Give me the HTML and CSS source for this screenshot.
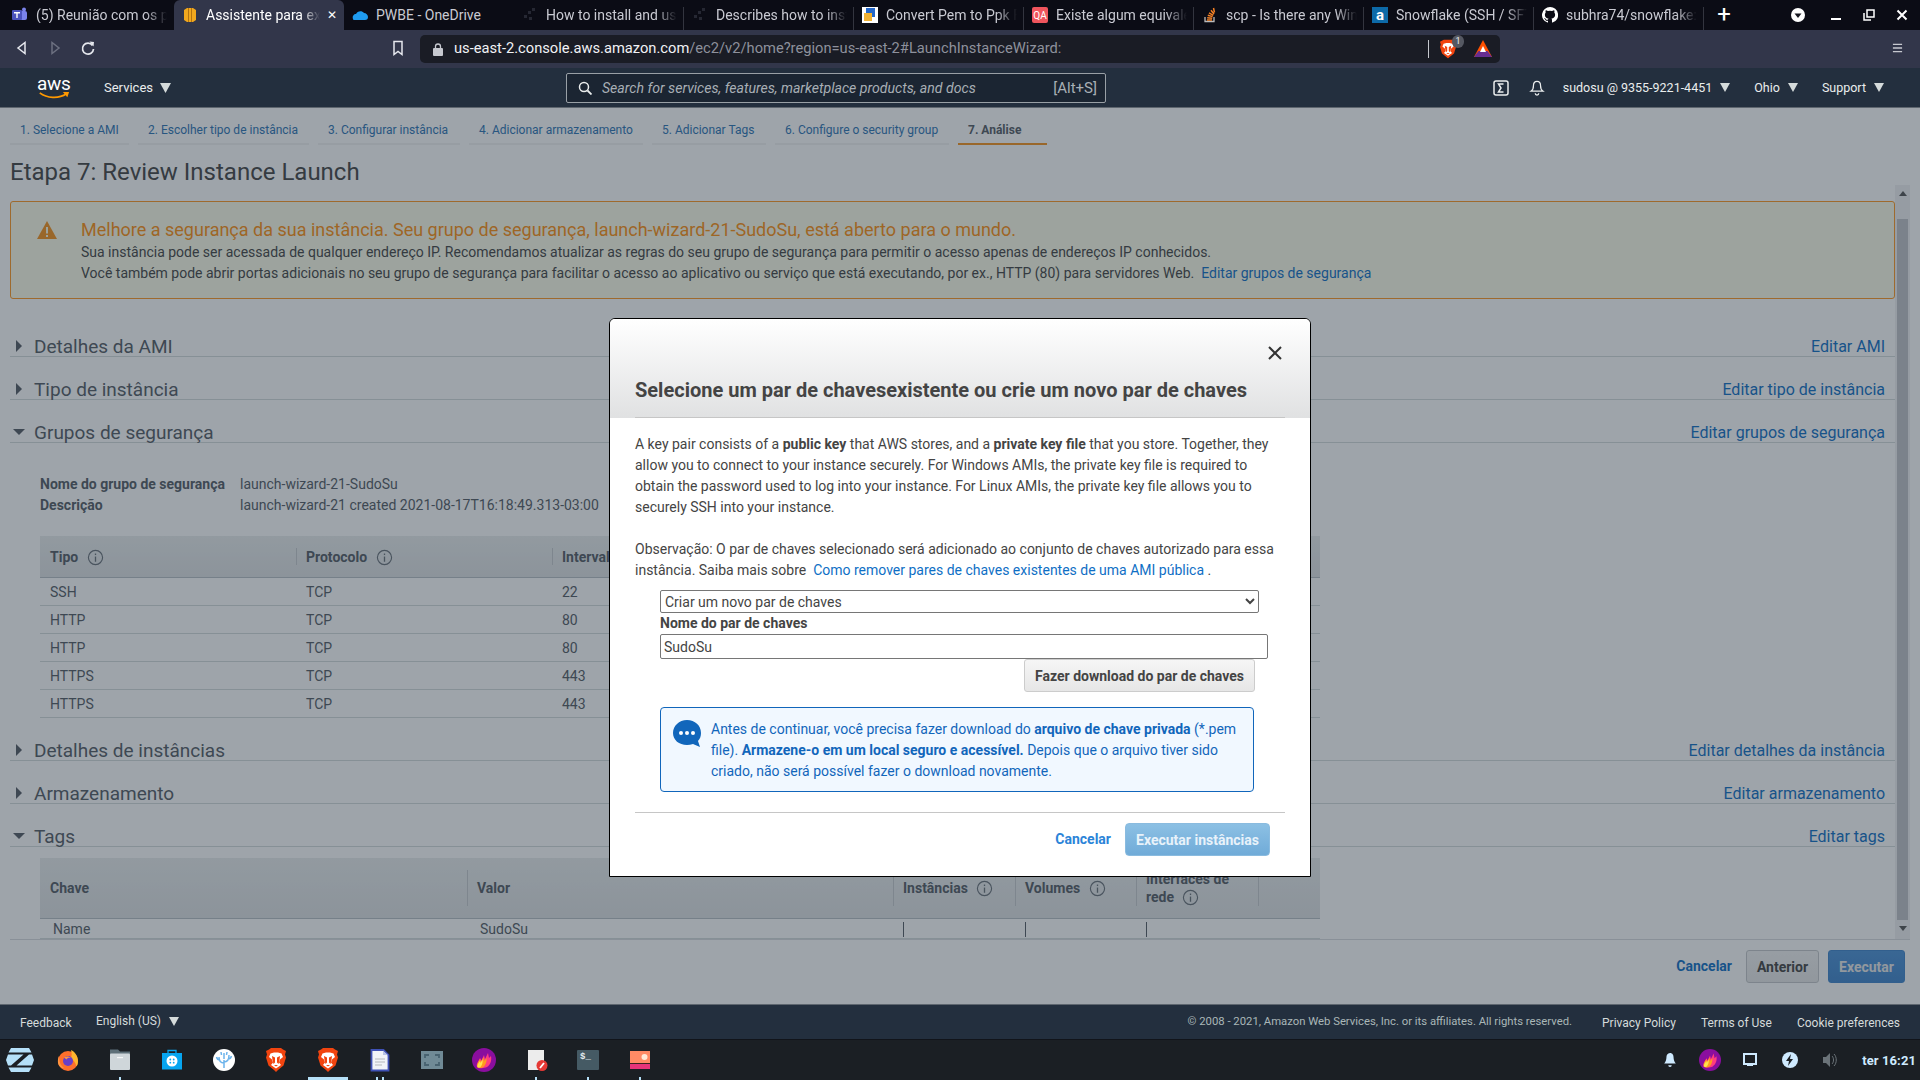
FILE: index.html
```html
<!DOCTYPE html>
<html lang="pt">
<head>
<meta charset="utf-8">
<title>Assistente para executar instâncias</title>
<link rel="stylesheet" href="styles.css">
</head>
<body>
<svg class="defs" width="0" height="0" aria-hidden="true">
  <defs>
    <symbol id="brave" viewBox="0 0 20 24">
      <path fill="#f1440f" d="M5 0h10l2 1.500 3 1.500-1 3.500 1 3-2.500 8L12 22l-2 2-2-2-5.500-4.500L0 9.500l1-3L0 3l3-1.500z"/>
      <path fill="#fff" d="M4.500 5.500L8 4.500h4l3.500 1 1.500 3.500-3 2.500-1 3 2 2.500-5 3.500-5-3.500 2-2.500-1-3L3 9z"/>
      <path fill="#f1440f" d="M6 8l3 1.500v5L7.500 16 6.500 12zM14 8l-3 1.500v5l1.500 1.500 1-4zM8 17h4l-2 1.500z"/>
    </symbol>
    <symbol id="flame" viewBox="0 0 24 24">
      <circle cx="12" cy="12" r="12" fill="#8a0e9e"/>
      <path fill="#ff3d7f" d="M5 19c-1-4 2-6 3-9l1.500 2.500L12 7l1 4 3-6 1 5 2-2c1 5-1 9-4 11-3 1.500-8 1.500-10 0z"/>
      <path fill="#ff9a1f" d="M5 19c-.5-3 1.500-5 3-8l1 3 2.500-5 .5 4 2.500-3c.5 4-1 7-3 9-2 1.500-5 1.500-6.500 0z"/>
      <path fill="#ffe14d" d="M5.500 19c-.5-2 1-4 2.500-6l.5 2 2-3.500c.5 3-.5 6-2 7.500-1 .7-2.300.7-3 0z"/>
    </symbol>
    <symbol id="info" viewBox="0 0 18 18">
      <circle cx="9" cy="9" r="7.5" fill="none" stroke="#687078" stroke-width="1.2"/>
      <rect x="8.3" y="8" width="1.4" height="5.5" fill="#687078"/>
      <rect x="8.3" y="4.8" width="1.4" height="1.6" fill="#687078"/>
    </symbol>
    <symbol id="down" viewBox="0 0 10 9"><path fill="#d5dbdb" d="M0 0h10L5 9z"/></symbol>
    <symbol id="coll" viewBox="0 0 8 12"><path fill="#545b64" d="M1 0l6 6-6 6z"/></symbol>
    <symbol id="open" viewBox="0 0 12 8"><path fill="#545b64" d="M0 1h12L6 7z"/></symbol>
  </defs>
</svg>

<header class="tabstrip">
  <div class="tab"><svg class="fav" viewBox="0 0 16 16"><rect x="6" y="4" width="9" height="9" rx="2" fill="#7b83eb"/><circle cx="12" cy="2.5" r="2" fill="#7b83eb"/><rect x="0" y="3" width="10" height="10" rx="1" fill="#4b53bc"/><path fill="#fff" d="M2 5h6v1.4H5.7V11H4.3V6.4H2z"/></svg><span class="tab-title">(5) Reunião com os participantes</span></div>
  <div class="tab tab-active"><svg class="fav" viewBox="0 0 16 16"><path fill="#f2a81d" d="M2 3l3-2h6l3 2v10l-3 2H5l-3-2z"/><path fill="#b3730f" d="M6 1v14h1V1zM10 1v14H9V1z"/></svg><span class="tab-title">Assistente para executar</span><span class="tab-close">✕</span></div>
  <div class="tab"><svg class="fav" viewBox="0 0 16 16"><path fill="#1f9cf0" d="M1 12c-1-3 1-5 3-5 1-3 6-4 8-1 2 0 4 2 4 4s-1 3-3 3H3c-1 0-2 0-2-1z"/></svg><span class="tab-title tab-plain">PWBE - OneDrive</span></div>
  <div class="tab"><svg class="fav" viewBox="0 0 16 16"><g fill="#262833"><rect x="2" y="8" width="3" height="3"/><rect x="6" y="4" width="3" height="3"/><rect x="10" y="1" width="3" height="3"/><rect x="7" y="10" width="3" height="3"/></g></svg><span class="tab-title">How to install and use</span></div>
  <div class="tab"><svg class="fav" viewBox="0 0 16 16"><g fill="#262833"><rect x="2" y="8" width="3" height="3"/><rect x="6" y="4" width="3" height="3"/><rect x="10" y="1" width="3" height="3"/><rect x="7" y="10" width="3" height="3"/></g></svg><span class="tab-title">Describes how to install</span></div>
  <div class="tab"><svg class="fav" viewBox="0 0 16 16"><rect width="16" height="16" fill="#fff"/><rect x="4" y="1" width="9" height="9" fill="#2467c9"/><rect x="2" y="6" width="8" height="8" fill="#f2b233"/></svg><span class="tab-title">Convert Pem to Ppk File</span></div>
  <div class="tab"><svg class="fav" viewBox="0 0 16 16"><rect width="16" height="16" rx="2" fill="#f0555d"/><text x="8" y="12" class="fav-text">QA</text></svg><span class="tab-title">Existe algum equivalente</span></div>
  <div class="tab"><svg class="fav" viewBox="0 0 16 16"><path fill="none" stroke="#bcbbbb" stroke-width="1.3" d="M3 10v4.5h9V10"/><path fill="none" stroke="#f48024" stroke-width="1.5" d="M5 13h5M5.2 10.7l5 .5M5.8 8.3l4.8 1.3M7 5.8l4.3 2.5M9 3.2l3 3.8M11.5 1l1 4.5"/></svg><span class="tab-title">scp - Is there any Windows</span></div>
  <div class="tab"><svg class="fav" viewBox="0 0 16 16"><rect width="16" height="16" fill="#0d6aa8"/><text x="8" y="13" class="fav-text fav-large">a</text></svg><span class="tab-title">Snowflake (SSH / SFTP</span></div>
  <div class="tab"><svg class="fav" viewBox="0 0 16 16"><path fill="#fff" d="M8 0a8 8 0 0 0-2.5 15.6c.4.1.5-.2.5-.4v-1.4c-2.2.5-2.7-1-2.7-1-.4-.9-.9-1.200-.9-1.200-.7-.5.100-.5.100-.5.800.100 1.200.8 1.200.8.700 1.200 1.900.9 2.300.7.100-.5.300-.9.500-1.100-1.800-.2-3.600-.9-3.600-4 0-.9.300-1.600.8-2.100-.1-.2-.4-1 .1-2.100 0 0 .7-.2 2.200.8a7.600 7.600 0 0 1 4 0c1.500-1 2.200-.8 2.200-.8.500 1.100.2 1.900.1 2.100.5.500.8 1.200.8 2.100 0 3.100-1.900 3.800-3.700 4 .3.300.6.800.6 1.500v2.200c0 .2.100.5.600.4A8 8 0 0 0 8 0z"/></svg><span class="tab-title">subhra74/snowflake: Easy</span></div>
  <span class="new-tab">+</span>
  <div class="win-controls">
    <svg class="win-profile" viewBox="0 0 14 14"><circle cx="7" cy="7" r="7" fill="#fff"/><path fill="#15161f" d="M3.500 5.500h7L7 10z"/></svg>
    <svg class="win-icon" viewBox="0 0 14 14"><rect x="2" y="10" width="10" height="2" fill="#fff"/></svg>
    <svg class="win-icon" viewBox="0 0 14 14"><path fill="none" stroke="#fff" stroke-width="1.500" d="M5 2h7v7H5zM2 5v7h7"/></svg>
    <svg class="win-icon" viewBox="0 0 14 14"><path stroke="#fff" stroke-width="2" d="M2.500 2.500l9 9M11.500 2.500l-9 9"/></svg>
  </div>
</header>

<div class="toolbar">
  <div class="nav-buttons">
    <svg class="tool-icon" viewBox="0 0 16 16"><path fill="none" stroke="#e6e8ee" stroke-width="1.500" d="M11 2.500v11L4 8z"/></svg>
    <svg class="tool-icon" viewBox="0 0 16 16"><path fill="none" stroke="#6c7080" stroke-width="1.500" d="M5 2.500v11L12 8z"/></svg>
    <svg class="tool-icon" viewBox="0 0 16 16"><path fill="none" stroke="#e6e8ee" stroke-width="1.700" d="M12.500 5.500A5.500 5.500 0 1 0 13.500 9"/><path fill="#e6e8ee" d="M9.500 1.500l4.500.5-.5 4.500z"/></svg>
  </div>
  <svg class="bookmark" viewBox="0 0 12 16"><path fill="none" stroke="#e6e8ee" stroke-width="1.500" d="M2 1.500h8v13l-4-3-4 3z"/></svg>
  <div class="address">
    <svg class="lock" viewBox="0 0 10 13"><rect y="5" width="10" height="8" rx="1" fill="#c6c8cf"/><path fill="none" stroke="#c6c8cf" stroke-width="1.300" d="M2.500 5V3.500a2.500 2.500 0 0 1 5 0V5"/></svg>
    <span class="url"><span class="url-host">us-east-2.console.aws.amazon.com</span>/ec2/v2/home?region=us-east-2#LaunchInstanceWizard:</span>
    <span class="addr-sep"></span>
    <span class="shield-wrap"><svg class="shield" viewBox="0 0 20 24"><use href="#brave"/></svg><span class="shield-badge">1</span></span>
    <svg class="bat" viewBox="0 0 18 18"><path fill="#ff5000" d="M9 0l9 17H0z"/><path fill="#662d91" d="M4.500 11h9L18 17H0z"/><path fill="#fff" d="M9 6l3 6H6z"/></svg>
  </div>
  <svg class="hamburger" viewBox="0 0 12 12"><path stroke="#c6c8cf" stroke-width="1.500" d="M1 2h10M1 6h10M1 10h10"/></svg>
</div>

<nav class="aws-nav">
  <div class="aws-logo"><span class="aws-word">aws</span><svg class="aws-smile" viewBox="0 0 34 9"><path fill="none" stroke="#f90" stroke-width="2" d="M1 1c8 6 21 7 30 1"/><path fill="#f90" d="M27 0l7 0-2 6z"/></svg></div>
  <span class="nav-item nav-services">Services<svg class="caret caret-big" viewBox="0 0 10 9"><use href="#down"/></svg></span>
  <div class="search">
    <svg class="search-icon" viewBox="0 0 14 14"><circle cx="6" cy="6" r="4.500" fill="none" stroke="#eaeded" stroke-width="1.500"/><path stroke="#eaeded" stroke-width="1.800" d="M9.500 9.500l4 4"/></svg>
    <span class="search-text">Search for services, features, marketplace products, and docs</span>
    <span class="search-key">[Alt+S]</span>
  </div>
  <div class="nav-right">
    <svg class="nav-svg" viewBox="0 0 16 16"><rect x="1" y="1" width="14" height="14" rx="2" fill="none" stroke="#eaeded" stroke-width="1.500"/><path fill="none" stroke="#eaeded" stroke-width="1.500" d="M10.500 4H5.500L8 8l-2.500 4h5"/></svg>
    <svg class="nav-svg bell" viewBox="0 0 16 18"><path fill="none" stroke="#eaeded" stroke-width="1.400" d="M8 1.500c-3 0-4 2.500-4 5 0 3-1 5-2.500 6h13c-1.500-1-2.500-3-2.500-6 0-2.500-1-5-4-5z"/><path fill="none" stroke="#eaeded" stroke-width="1.400" d="M6 15a2 2 0 0 0 4 0"/></svg>
    <span class="nav-item nav-user">sudosu @ 9355-9221-4451<svg class="caret" viewBox="0 0 10 9"><use href="#down"/></svg></span>
    <span class="nav-item nav-region">Ohio<svg class="caret" viewBox="0 0 10 9"><use href="#down"/></svg></span>
    <span class="nav-item nav-support">Support<svg class="caret" viewBox="0 0 10 9"><use href="#down"/></svg></span>
  </div>
</nav>

<main class="console">
  <ul class="wizard">
    <li class="step">1. Selecione a AMI</li>
    <li class="step">2. Escolher tipo de instância</li>
    <li class="step">3. Configurar instância</li>
    <li class="step">4. Adicionar armazenamento</li>
    <li class="step">5. Adicionar Tags</li>
    <li class="step">6. Configure o security group</li>
    <li class="step step-active">7. Análise</li>
  </ul>
  <h1 class="page-title">Etapa 7: Review Instance Launch</h1>
  <div class="scroll-row">
    <div class="scroll-content">
      <div class="warning">
        <svg class="warn-icon" viewBox="0 0 20 18"><path fill="#f7931e" d="M10 0l10 18H0z"/><rect x="9" y="6" width="2" height="6.500" fill="#fdfeea"/><rect x="9" y="14" width="2" height="2" fill="#fdfeea"/></svg>
        <div class="warn-body">
          <div class="warn-title">Melhore a segurança da sua instância. Seu grupo de segurança, launch-wizard-21-SudoSu, está aberto para o mundo.</div>
          <div>Sua instância pode ser acessada de qualquer endereço IP. Recomendamos atualizar as regras do seu grupo de segurança para permitir o acesso apenas de endereços IP conhecidos.</div>
          <div>Você também pode abrir portas adicionais no seu grupo de segurança para facilitar o acesso ao aplicativo ou serviço que está executando, por ex., HTTP (80) para servidores Web.&nbsp; <a class="link warn-link">Editar grupos de segurança</a></div>
        </div>
      </div>

      <div class="section"><svg class="tri-coll" viewBox="0 0 8 12"><use href="#coll"/></svg><span class="section-name">Detalhes da AMI</span><a class="link section-edit">Editar AMI</a></div>
      <div class="section"><svg class="tri-coll" viewBox="0 0 8 12"><use href="#coll"/></svg><span class="section-name">Tipo de instância</span><a class="link section-edit">Editar tipo de instância</a></div>
      <div class="section"><svg class="tri-open" viewBox="0 0 12 8"><use href="#open"/></svg><span class="section-name">Grupos de segurança</span><a class="link section-edit">Editar grupos de segurança</a></div>

      <dl class="details">
        <dt>Nome do grupo de segurança</dt><dd>launch-wizard-21-SudoSu</dd>
        <dt>Descrição</dt><dd>launch-wizard-21 created 2021-08-17T16:18:49.313-03:00</dd>
      </dl>

      <table class="grid grid-sg">
        <colgroup><col class="c256"><col class="c256"><col></colgroup>
        <thead><tr><th>Tipo <svg class="info" viewBox="0 0 18 18"><use href="#info"/></svg></th><th>Protocolo <svg class="info" viewBox="0 0 18 18"><use href="#info"/></svg></th><th>Intervalo de portas</th></tr></thead>
        <tbody>
          <tr><td>SSH</td><td>TCP</td><td>22</td></tr>
          <tr><td>HTTP</td><td>TCP</td><td>80</td></tr>
          <tr><td>HTTP</td><td>TCP</td><td>80</td></tr>
          <tr><td>HTTPS</td><td>TCP</td><td>443</td></tr>
          <tr><td>HTTPS</td><td>TCP</td><td>443</td></tr>
        </tbody>
      </table>

      <div class="section"><svg class="tri-coll" viewBox="0 0 8 12"><use href="#coll"/></svg><span class="section-name">Detalhes de instâncias</span><a class="link section-edit">Editar detalhes da instância</a></div>
      <div class="section"><svg class="tri-coll" viewBox="0 0 8 12"><use href="#coll"/></svg><span class="section-name">Armazenamento</span><a class="link section-edit">Editar armazenamento</a></div>
      <div class="section"><svg class="tri-open" viewBox="0 0 12 8"><use href="#open"/></svg><span class="section-name">Tags</span><a class="link section-edit">Editar tags</a></div>

      <table class="grid grid-tags">
        <colgroup><col class="c427"><col class="c426"><col class="c122"><col class="c121"><col class="c122"><col></colgroup>
        <thead><tr><th>Chave</th><th>Valor</th><th>Instâncias <svg class="info" viewBox="0 0 18 18"><use href="#info"/></svg></th><th>Volumes <svg class="info" viewBox="0 0 18 18"><use href="#info"/></svg></th><th>Interfaces de rede <svg class="info" viewBox="0 0 18 18"><use href="#info"/></svg></th><th></th></tr></thead>
        <tbody><tr><td class="td-indent">Name</td><td class="td-indent">SudoSu</td><td class="td-tick"></td><td class="td-tick"></td><td class="td-tick"></td><td></td></tr></tbody>
      </table>
    </div>
    <div class="scrollbar"><span class="sb-arrow sb-up"></span><span class="sb-thumb"></span><span class="sb-arrow sb-down"></span></div>
  </div>
  <div class="actions">
    <a class="link action-cancel">Cancelar</a>
    <button class="btn btn-prev">Anterior</button>
    <button class="btn btn-run">Executar</button>
  </div>
  <div class="overlay"></div>
</main>

<footer class="aws-footer">
  <span class="foot-feedback">Feedback</span>
  <span class="foot-lang">English (US)<svg class="caret" viewBox="0 0 10 9"><use href="#down"/></svg></span>
  <span class="foot-copy">© 2008 - 2021, Amazon Web Services, Inc. or its affiliates. All rights reserved.</span>
  <span class="foot-link">Privacy Policy</span>
  <span class="foot-link">Terms of Use</span>
  <span class="foot-link">Cookie preferences</span>
</footer>

<div class="taskbar">
  <svg class="zorin" viewBox="0 0 28 24"><path fill="#b5e0f8" d="M5 0h18l2.500 4.500H2.500zM2.500 19.500h23L23 24H5z"/><path fill="#b5e0f8" d="M2 6.500h15.500L5 17.500H2l-2-5.500zM26 6.500l2 5.500-2 5.500H10.500L23 6.500z"/></svg>
  <div class="dock">
    <span class="dock-item"><svg class="dock-icon" viewBox="0 0 24 24"><circle cx="12" cy="13" r="10" fill="#ff6f2c"/><path fill="#ffb52e" d="M15 2c4 2 7 6 7 11 0 2-.5 4-1.500 5.500-1-4-3-7-6-8 1.500-2.500 1.500-5 .5-8.500z"/><path fill="#ff9640" d="M3 8c0 5 1 9 5 12-3 0-5.500-2-6-5-.3-2.500 0-5 1-7z"/><circle cx="12" cy="13" r="5" fill="#6a3fc8"/><path fill="#ff9640" d="M8 9.500c2-1.500 5-1.500 7 .5-2-.5-4 0-4.500 1.500z"/></svg></span>
    <span class="dock-item dots-1"><svg class="dock-icon" viewBox="0 0 24 24"><path fill="#5d6f78" d="M2 1.500h8l2 2h10v5H2z"/><rect x="2" y="5.500" width="20" height="16.500" rx="1" fill="#cfd6da"/><rect x="9" y="9" width="6" height="1.200" fill="#f4f6f7"/></svg></span>
    <span class="dock-item"><svg class="dock-icon" viewBox="0 0 24 24"><rect x="2" y="5" width="20" height="16.500" fill="#06a5f0"/><path fill="none" stroke="#06a5f0" stroke-width="1.300" d="M8 5V2.500h8V5"/><circle cx="12" cy="13" r="5.500" fill="#fff"/><circle cx="10.300" cy="11.500" r=".9" fill="#06a5f0"/><circle cx="13.700" cy="11.500" r=".9" fill="#06a5f0"/><circle cx="10.300" cy="14.700" r=".9" fill="#06a5f0"/><circle cx="13.700" cy="14.700" r=".9" fill="#06a5f0"/></svg></span>
    <span class="dock-item"><svg class="dock-icon" viewBox="0 0 24 24"><circle cx="12" cy="12" r="11" fill="#fff"/><path fill="none" stroke="#6cb4ec" stroke-width="1.500" d="M12 20v-8M12 15c-3 0-5-2-5-6M12 14c3 0 5-2 5-7M8 12c-1.500 0-3-1-3.500-3M16 11c1.500 0 3-1 3.500-3M12 11V5M9.500 7L9 4M14.500 7l.5-3"/></svg></span>
    <span class="dock-item"><svg class="dock-brave" viewBox="0 0 20 24"><use href="#brave"/></svg></span>
    <span class="dock-item dock-active"><svg class="dock-brave" viewBox="0 0 20 24"><use href="#brave"/></svg></span>
    <span class="dock-item dots-2"><svg class="dock-icon" viewBox="0 0 24 24"><path fill="#f1f3f8" d="M4 2h11l5 5v15H4z"/><path fill="none" stroke="#3f51b5" stroke-width="1.800" d="M3.500 2h12l5 5v15.500h-17z"/><path fill="#b9c3e6" d="M15 2.500V7h5z"/><path stroke="#b5b8bd" stroke-width="1" d="M7 11h10M7 14h10M7 17h7"/></svg></span>
    <span class="dock-item"><svg class="dock-icon" viewBox="0 0 24 24"><rect x="1" y="3" width="22" height="18" fill="#708a96"/><path fill="none" stroke="#486270" stroke-width="1.800" d="M5 10V7h4M15 7h4v3M19 14v3h-4M9 17H5v-3"/></svg></span>
    <span class="dock-item"><svg class="dock-icon" viewBox="0 0 24 24"><use href="#flame"/></svg></span>
    <span class="dock-item dots-1"><svg class="dock-icon" viewBox="0 0 24 24"><rect x="4" y="2" width="16" height="20" fill="#ececec"/><circle cx="18" cy="17.500" r="5.500" fill="#e53935"/><path stroke="#fff" stroke-width="1.800" d="M16 20l4-5"/></svg></span>
    <span class="dock-item dots-1"><svg class="dock-icon" viewBox="0 0 24 24"><rect x="1" y="2" width="22" height="20" rx="1" fill="#455a64"/><text x="4" y="11" class="term-text">$_</text></svg></span>
    <span class="dock-item dots-1"><svg class="dock-icon" viewBox="0 0 24 24"><rect x="2" y="3" width="20" height="12" fill="#ff8a65"/><rect x="2" y="15" width="20" height="1" fill="#3a2020"/><rect x="2" y="16" width="20" height="5" fill="#e6337a"/><circle cx="16.500" cy="9" r="3" fill="#ffe9d8"/></svg></span>
  </div>
  <div class="tray">
    <svg class="tray-icon" viewBox="0 0 16 18"><path fill="#cfeaff" d="M8 1c-3 0-4 2.500-4 5 0 3-1 5-2.500 7h13C13 11 12 9 12 6c0-2.500-1-5-4-5z"/><path fill="#cfeaff" d="M6 15h4a2 2 0 0 1-4 0z"/></svg>
    <svg class="tray-icon tray-flame" viewBox="0 0 24 24"><use href="#flame"/></svg>
    <svg class="tray-icon" viewBox="0 0 16 16"><path fill="none" stroke="#cfeaff" stroke-width="2" d="M2 2h12v10H2z"/><rect x="5" y="12" width="6" height="2" fill="#cfeaff"/></svg>
    <svg class="tray-icon" viewBox="0 0 16 16"><circle cx="8" cy="8" r="8" fill="#cfeaff"/><path fill="#1b1f24" d="M9 2L4 9h3l-1 5 5-7H8z"/></svg>
    <svg class="tray-icon" viewBox="0 0 16 16"><path fill="#6b7379" d="M1 5h3l4-4v14l-4-4H1z"/><path fill="none" stroke="#6b7379" d="M10 4c2 2 2 6 0 8M12 2c3 3 3 9 0 12"/></svg>
    <span class="clock">ter 16:21</span>
  </div>
</div>

<section class="modal" role="dialog">
  <div class="modal-head">
    <svg class="modal-close" viewBox="0 0 14 14"><path stroke="#333" stroke-width="2" d="M1 1l12 12M13 1L1 13"/></svg>
    <h2 class="modal-title">Selecione um par de chavesexistente ou crie um novo par de chaves</h2>
  </div>
  <div class="modal-body">
    <p class="modal-text">A key pair consists of a <b>public key</b> that AWS stores, and a <b>private key file</b> that you store. Together, they allow you to connect to your instance securely. For Windows AMIs, the private key file is required to obtain the password used to log into your instance. For Linux AMIs, the private key file allows you to securely SSH into your instance.</p>
    <p class="modal-text">Observação: O par de chaves selecionado será adicionado ao conjunto de chaves autorizado para essa instância. Saiba mais sobre&nbsp; <a class="modal-link">Como remover pares de chaves existentes de uma AMI pública</a> .</p>
    <div class="form">
      <select class="key-select"><option>Criar um novo par de chaves</option></select>
      <label class="key-label">Nome do par de chaves</label>
      <input class="key-input" type="text" value="SudoSu">
      <button class="btn-download">Fazer download do par de chaves</button>
      <div class="notice">
        <svg class="notice-icon" viewBox="0 0 30 30"><path fill="#1166bb" d="M15 1c8 0 14 5.500 14 13 0 3-1 6-3 8l2 6-7-3c-2 .7-4 1-6 1C7 26 1 21 1 14S7 1 15 1z"/><circle cx="9" cy="14" r="2" fill="#fff"/><circle cx="15" cy="14" r="2" fill="#fff"/><circle cx="21" cy="14" r="2" fill="#fff"/></svg>
        <p class="notice-text">Antes de continuar, você precisa fazer download do <b>arquivo de chave privada</b> (*.pem file). <b>Armazene-o em um local seguro e acessível.</b> Depois que o arquivo tiver sido criado, não será possível fazer o download novamente.</p>
      </div>
    </div>
  </div>
  <div class="modal-foot">
    <a class="modal-cancel">Cancelar</a>
    <button class="btn-launch">Executar instâncias</button>
  </div>
</section>
</body>
</html>
```

FILE: styles.css
```css
* { box-sizing: border-box; }
html, body { margin: 0; padding: 0; height: 100%; overflow: hidden; }
body {
  width: 1920px; height: 1080px;
  display: flex; flex-direction: column;
  font-family: Roboto, "Liberation Sans", sans-serif;
  font-size: 14px; color: #444;
  background: #fff; position: relative;
}
.defs { position: absolute; }
a { text-decoration: none; }

/* browser tab strip */
.tabstrip { height: 30px; flex: none; display: flex; background: #0b0c15; padding-left: 4px; color: #c9cad2; }
.tab { width: 170px; height: 30px; display: flex; align-items: center; padding-left: 8px; position: relative; font-size: 14px; }
.tab::after { content: ""; position: absolute; right: 0; top: 7px; bottom: 0; width: 1px; background: #33353f; }
.tab:nth-child(1)::after, .tab:nth-child(2)::after, .tab:nth-child(3)::after { display: none; }
.tab-active { background: #32364a; color: #fff; border-radius: 6px 6px 0 0; }
.fav { width: 16px; height: 16px; flex: none; margin-right: 8px; }
.fav-text { fill: #fff; font: 400 10px Roboto, sans-serif; text-anchor: middle; }
.fav-large { font-size: 15px; font-weight: 700; }
.tab-title {
  white-space: nowrap; overflow: hidden; flex: 1; margin-right: 7px;
  -webkit-mask-image: linear-gradient(90deg, #000 84%, transparent 100%);
  mask-image: linear-gradient(90deg, #000 84%, transparent 100%);
}
.tab-plain { -webkit-mask-image: none; mask-image: none; }
.tab-active .tab-title { margin-right: 2px; }
.tab-close { width: 20px; flex: none; font-size: 12px; color: #fff; text-align: center; margin-right: 2px; }
.new-tab { width: 40px; margin-left: 0; color: #fff; font-size: 24px; line-height: 28px; text-align: center; font-weight: 400; }
.win-controls { margin-left: auto; display: flex; align-items: center; gap: 19px; padding-right: 11px; }
.win-profile { width: 14px; height: 14px; margin-right: 5px; }
.win-icon { width: 14px; height: 14px; }

/* browser toolbar */
.toolbar { height: 38px; flex: none; background: #32364a; display: flex; align-items: center; padding: 0 17px 2px 14px; }
.nav-buttons { display: flex; gap: 17px; width: 368px; }
.tool-icon { width: 16px; height: 16px; }
.bookmark { width: 12px; height: 16px; margin-left: 10px; margin-right: 16px; }
.address {
  width: 1080px; height: 28px; flex: none; background: #1a1c25; border-radius: 5px; margin-top: 2px;
  display: flex; align-items: center; padding-left: 13px; color: #8e919c; font-size: 14.7px;
}
.lock { width: 10px; height: 13px; margin-right: 11px; }
.url { width: 974px; white-space: nowrap; margin-top: -2px; }
.url-host { color: #f1f2f5; }
.addr-sep { width: 1px; height: 18px; background: #c6c8cf; }
.shield-wrap { position: relative; display: flex; margin-left: 11px; }
.shield { width: 16px; height: 20px; }
.shield-badge {
  position: absolute; left: 12px; top: -4px; width: 12px; height: 13px; border-radius: 6px;
  background: #555862; color: #eee; font-size: 9px; line-height: 13px; text-align: center;
}
.bat { width: 18px; height: 18px; margin-left: 18px; }
.hamburger { width: 11px; height: 12px; margin-left: auto; }

/* aws nav */
.aws-nav {
  height: 40px; flex: none; background: #232f3e; border-bottom: 1px solid #5e666f;
  display: flex; align-items: center; color: #eaeded; font-size: 12px;
}
.aws-logo { width: 67px; margin-left: 37px; display: flex; flex-direction: column; height: 24px; }
.aws-word { color: #fff; font-size: 19px; line-height: 16px; letter-spacing: -.3px; }
.aws-smile { width: 34px; height: 8px; }
.nav-item { display: flex; align-items: center; white-space: nowrap; }
.nav-services { font-size: 13px; width: 462px; }
.caret { width: 10px; height: 9px; margin-left: 8px; }
.caret-big { width: 11px; height: 10px; margin-left: 7px; }
.search {
  width: 540px; height: 30px; flex: none; margin-top: 1px; border: 1px solid #99a0a6; border-radius: 2px;
  display: flex; align-items: center; padding: 0 8px 0 11px; background: #1b2532;
  font-size: 14.1px; color: #a8afb5;
}
.search-icon { width: 14px; height: 14px; margin-right: 10px; }
.search-text { font-style: italic; flex: 1; white-space: nowrap; }
.search-key { color: #a8afb5; font-size: 15px; }
.nav-right { margin-left: auto; display: flex; align-items: center; padding-right: 36px; font-size: 12.5px; }
.nav-svg { width: 16px; height: 16px; margin-right: 20px; }
.bell { margin-right: 18px; }
.nav-user { margin-right: 24px; }
.nav-region { margin-right: 24px; }

/* console */
.console { flex: 1; position: relative; min-height: 0; background: #fff; display: flex; flex-direction: column; }
.wizard { list-style: none; margin: 0; padding: 0 0 0 10px; display: flex; gap: 9px; height: 37px; flex: none; }
.step { height: 37px; padding: 0 10px; line-height: 44px; font-size: 12px; color: #2d74b4; border-bottom: 2px solid #f2f3f3; white-space: nowrap; }
.step:nth-child(1) { width: 119px; }
.step:nth-child(2) { width: 171px; }
.step:nth-child(3) { width: 142px; }
.step:nth-child(4) { width: 174px; }
.step:nth-child(5) { width: 114px; }
.step:nth-child(6) { width: 174px; }
.step-active { width: 89px; color: #545b64; font-weight: 700; border-bottom-color: #f7931e; }
.page-title { margin: 13px 0 0 10px; height: 27px; font-size: 24px; line-height: 28px; font-weight: 400; color: #444; flex: none; }

.scroll-row { height: 755px; flex: none; display: flex; margin-left: 10px; margin-right: 10px; border-bottom: 1px solid #d9dcdf; }
.scroll-content { width: 1885px; flex: none; padding-top: 16px; overflow: hidden; }
.warning {
  height: 98px; border: 1px solid #ff9822; border-radius: 3px; background: #fdfeea;
  display: flex; margin-bottom: 30px; padding: 17px 0 0 26px; line-height: 21px; color: #444;
}
.warn-icon { width: 20px; height: 18px; flex: none; margin: 2px 24px 0 0; }
.warn-body { white-space: nowrap; }
.warn-title { font-size: 18px; color: #ff9011; line-height: 21px; margin-bottom: 2px; }
.link { color: #0f6fc5; }
.section {
  height: 28px; margin-top: 15px; border-bottom: 1px solid #d5dbdb; display: flex; align-items: center;
  position: relative; padding: 9px 10px 0 24px;
}
.tri-coll { width: 8px; height: 12px; position: absolute; left: 5px; top: 11px; }
.tri-open { width: 12px; height: 8px; position: absolute; left: 3px; top: 13px; }
.section-name { font-size: 19px; color: #545b64; line-height: 24px; }
.section-edit { margin-left: auto; margin-top: -1px; font-size: 16px; }
.details { margin: 31px 0 20px 30px; display: grid; grid-template-columns: 200px auto; line-height: 21px; }
.details dt { font-weight: 700; color: #545b64; }
.details dd { margin: 0; color: #545b64; }
.grid { border-collapse: collapse; table-layout: fixed; width: 1280px; margin-left: 30px; color: #545b64; }
.c256 { width: 256px; }
.c427 { width: 427px; }
.c426 { width: 426px; }
.c122 { width: 122px; }
.c121 { width: 121px; }
.grid th {
  background: linear-gradient(#eaeded, #dfe2e4); border-bottom: 1px solid #b8bfc4; text-align: left; font-weight: 700;
  padding: 1px 10px 0; position: relative; white-space: normal; line-height: 18px;
}
.grid th + th::before { content: ""; position: absolute; left: 0; top: 12px; bottom: 12px; width: 1px; background: #c6cacd; }
.grid-sg th { height: 41px; }
.grid-sg td { height: 28px; padding: 1px 10px 0; border-bottom: 1px solid #d5dbdb; }
.grid-tags { margin-top: 11px; }
.grid-tags th { height: 61px; }
.grid-tags td { height: 19px; padding: 1px 13px 0; line-height: 18px; border-bottom: 1px solid #d5dbdb; }
.td-tick { position: relative; }
.td-tick::before { content: ""; position: absolute; left: 10px; top: 3px; bottom: 1px; width: 1px; background: #545b64; }
.info { width: 17px; height: 17px; vertical-align: -4px; margin-left: 5px; }

.scrollbar { width: 15px; flex: none; display: flex; flex-direction: column; background: #f0f1f2; align-items: center; }
.sb-arrow { height: 19px; flex: none; position: relative; width: 100%; }
.sb-up::before { content: ""; position: absolute; left: 4px; top: 6px; border: 4px solid transparent; border-top: 0; border-bottom: 5px solid #555; }
.sb-down::before { content: ""; position: absolute; left: 4px; top: 6px; border: 4px solid transparent; border-bottom: 0; border-top: 5px solid #555; }
.sb-thumb { width: 11px; flex: 1; background: #c1c3c8; margin-top: 15px; }

.actions { height: 65px; display: flex; align-items: flex-start; justify-content: flex-end; padding: 10px 15px 0 0; flex: none; }
.action-cancel { font-weight: 700; margin: 8px 14px 0 0; font-size: 14px; }
.btn { height: 33px; border-radius: 3px; font: 700 14px Roboto, sans-serif; }
.btn-prev { width: 73px; background: linear-gradient(#f3f3f3, #e8e8e8); border: 1px solid #c5c7c9; color: #444; margin-right: 9px; padding: 0; }
.btn-run { width: 77px; background: linear-gradient(#4c92d8, #3f85cc); border: 1px solid #3f85cc; color: #eaeaea; padding: 0; }
.overlay { position: absolute; inset: 0; background: rgba(35, 47, 62, .44); }

/* aws footer */
.aws-footer {
  height: 35px; flex: none; background: #232f3e; display: flex; align-items: center; color: #d5dbdb; font-size: 12px;
  padding: 1px 20px 0 20px; border-top: 1px solid #5e666f;
}
.foot-feedback { width: 76px; }
.foot-lang { display: flex; align-items: center; margin-top: -3px; }
.foot-copy { margin-left: auto; color: #aab7b8; margin-right: 30px; margin-top: -2px; font-size: 11.3px; }
.foot-link + .foot-link { margin-left: 25px; }

/* desktop taskbar */
.taskbar { height: 41px; flex: none; background: #1b1f24; display: flex; align-items: center; border-top: 1px solid #11141a; }
.zorin { width: 28px; height: 24px; margin-left: 6px; flex: none; }
.dock { display: flex; margin-left: 8px; height: 100%; }
.dock-item { width: 52px; height: 100%; display: flex; align-items: center; justify-content: center; position: relative; }
.dock-icon { width: 24px; height: 24px; }
.dock-brave { width: 20px; height: 24px; }
.dock-active::after { content: ""; position: absolute; left: 6px; right: 6px; bottom: 0; height: 3px; background: #b5e0f8; }
.dots-1::after { content: ""; position: absolute; left: 25px; bottom: 0; width: 2px; height: 3px; background: #b5e0f8; }
.dots-2::after { content: ""; position: absolute; left: 22px; bottom: 0; width: 8px; height: 3px; background: linear-gradient(90deg, #b5e0f8 25%, transparent 25%, transparent 75%, #b5e0f8 75%); }
.term-text { fill: #e4eaee; font: 700 9px "Liberation Mono", monospace; }
.tray { margin-left: auto; display: flex; align-items: center; gap: 24px; padding-right: 4px; }
.tray-icon { width: 16px; height: 16px; }
.tray-flame { width: 22px; height: 22px; margin: 0 -3px; }
.clock { color: #cfeaff; font-size: 13px; font-weight: 700; letter-spacing: .1px; }

/* modal */
.modal {
  position: absolute; left: 609px; top: 318px; width: 702px; height: 559px;
  background: #fff; border: 1px solid #000; border-radius: 6px 6px 0 0;
  display: flex; flex-direction: column; color: #444;
}
.modal-head {
  height: 99px; flex: none; position: relative; padding: 0 25px; border-radius: 5px 5px 0 0;
  background: linear-gradient(#fff, #e0e1e2);
}
.modal-close { position: absolute; left: 658px; top: 27px; width: 14px; height: 14px; }
.modal-title {
  margin: 0; padding-top: 59px; height: 99px; font-size: 20px; font-weight: 700; line-height: 24px; color: #444;
  border-bottom: 1px solid #c6c6c6; white-space: nowrap;
}
.modal-body { padding: 0 25px; flex: none; height: 394px; }
.modal-text { margin: 16px 0 21px; line-height: 21px; width: 640px; }
.modal-text + .modal-text { margin-top: 0; margin-bottom: 9px; }
.modal-link { color: #0f6fc5; }
.form { margin-left: 25px; display: flex; flex-direction: column; align-items: flex-start; }
.key-select { width: 599px; height: 23px; font: 14px Roboto, sans-serif; color: #444; border: 1px solid #767676; border-radius: 2px; background: #fff; padding: 0; }
.key-label { font-weight: 700; line-height: 21px; height: 21px; }
.key-input { width: 608px; height: 25px; font: 14px Roboto, sans-serif; color: #444; border: 1px solid #767676; border-radius: 2px; padding: 0 3px; }
.btn-download {
  width: 231px; height: 33px; margin-left: 364px; font: 700 14px Roboto, sans-serif; color: #444; padding: 0;
  background: linear-gradient(#f6f6f6, #e6e6e6); border: 1px solid #ccc; border-radius: 3px;
}
.notice {
  width: 594px; height: 85px; margin-top: 15px; border: 1px solid #1166bb; border-radius: 4px; background: #f1f8ff;
  display: flex; padding: 11px 10px 0 11px; color: #1166bb; line-height: 21px;
}
.notice-icon { width: 30px; height: 30px; flex: none; margin: 0 9px 0 0; }
.notice-text { margin: 0; }
.modal-foot {
  margin: 0 25px; flex: 1; border-top: 1px solid #c6c6c6; display: flex; justify-content: flex-end; align-items: flex-start;
  padding: 10px 15px 0 0;
}
.modal-cancel { color: #2b84d8; font-weight: 700; margin: 8px 14px 0 0; }
.btn-launch {
  width: 145px; height: 33px; font: 700 14px Roboto, sans-serif; color: #e8f2fa; padding: 0;
  background: linear-gradient(#8cc0e4, #70abd8); border: 1px solid #8abbdf; border-radius: 4px;
}
```
